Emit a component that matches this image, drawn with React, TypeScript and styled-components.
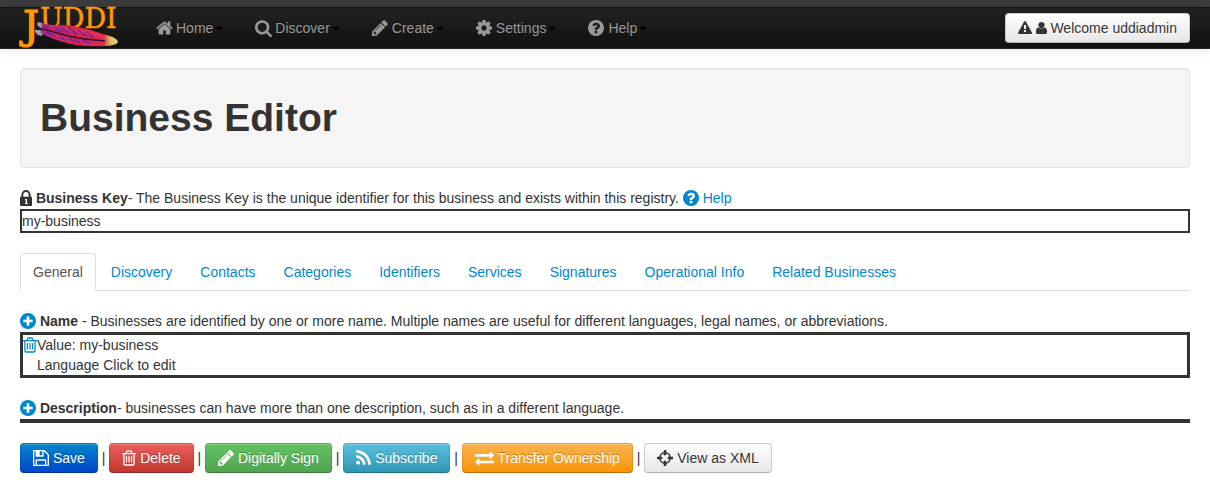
import React from "react";
import styled, { createGlobalStyle, css } from "styled-components";

const GlobalStyle = createGlobalStyle`
  * { box-sizing: border-box; }
  body {
    margin: 0;
    background: #fff;
    color: #333;
    font-family: "Liberation Sans", Arial, sans-serif;
    font-size: 14px;
    line-height: 20px;
  }
  a { color: #08c; text-decoration: none; }
`;

const CIRCLE =
  "M1664 896q0 209-103 385.5t-279.5 279.5-385.5 103-385.5-103-279.5-279.5-103-385.5 103-385.5 279.5-279.5 385.5-103 385.5 103 279.5 279.5 103 385.5z";

/* Each glyph: left edge on a 1792 grid, drawn width on that grid, rendered width in px, outline. */
const glyphs = {
  home: [64, 1664, 17, "M1472 992v480q0 26-19 45t-45 19h-384v-384h-256v384h-384q-26 0-45-19t-19-45v-480q0-1 .5-3t.5-3l575-474 575 474q1 2 1 6zm223-69l-62 74q-8 9-21 11h-3q-13 0-21-7l-692-577-692 577q-12 8-24 7-13-2-21-11l-62-74q-8-10-7-23.5t11-21.5l719-599q32-26 76-26t76 26l244 204v-195q0-14 9-23t23-9h192q14 0 23 9t9 23v408l219 182q10 8 11 21.5t-7 23.5z"],
  search: [64, 1664, 17, "M1216 832q0-185-131.5-316.5t-316.5-131.5-316.5 131.5-131.5 316.5 131.5 316.5 316.5 131.5 316.5-131.5 131.5-316.5zm512 832q0 52-38 90t-90 38q-54 0-90-38l-343-342q-179 124-399 124-143 0-273.5-55.5t-225-150-150-225-55.5-273.5 55.5-273.5 150-225 225-150 273.5-55.5 273.5 55.5 225 150 150 225 55.5 273.5q0 220-124 399l343 343q37 37 37 90z"],
  pencil: [128, 1536, 16, "M491 1536l91-91-235-235-91 91v107h128v128h107zm523-928q0-22-22-22-10 0-17 7l-542 542q-7 7-7 17 0 22 22 22 10 0 17-7l542-542q7-7 7-17zm-54-192l416 416-832 832h-416v-416zm683 96q0 53-37 90l-166 166-416-416 166-165q36-38 90-38 53 0 91 38l235 234q37 39 37 91z"],
  cog: [128, 1536, 16, "M1152 896q0-106-75-181t-181-75-181 75-75 181 75 181 181 75 181-75 75-181zm512-109v222q0 12-8 23t-20 13l-185 28q-19 54-39 91 35 50 107 138 10 12 10 25t-9 23q-27 37-99 108t-94 71q-12 0-26-9l-138-108q-44 23-91 38-16 136-29 186-7 28-36 28h-222q-14 0-24.5-8.5t-11.5-21.5l-28-184q-49-16-90-37l-141 107q-10 9-25 9-14 0-25-11-126-114-165-168-7-10-7-23 0-12 8-23 15-21 51-66.5t54-70.5q-27-50-41-99l-183-27q-13-2-21-12.5t-8-23.5v-222q0-12 8-23t19-13l186-28q14-46 39-92-40-57-107-138-10-12-10-24 0-10 9-23 26-36 98.5-107.5t94.5-71.5q13 0 26 10l138 107q44-23 91-38 16-136 29-186 7-28 36-28h222q14 0 24.5 8.5t11.5 21.5l28 184q49 16 90 37l142-107q9-9 24-9 13 0 25 10 129 119 165 170 7 8 7 22 0 12-8 23-15 21-51 66.5t-54 70.5q26 50 41 98l183 28q13 2 21 12.5t8 23.5z"],
  question: [128, 1536, 16, "M1024 1376v-192q0-14-9-23t-23-9h-192q-14 0-23 9t-9 23v192q0 14 9 23t23 9h192q14 0 23-9t9-23zm256-672q0-88-55.5-163t-138.5-116-170-41q-243 0-371 213-15 24 8 42l132 100q7 6 19 6 16 0 25-12 53-68 86-92 34-24 86-24 48 0 85.5 26t37.5 59q0 38-20 61t-68 45q-63 28-115.5 86.5t-52.5 125.5v36q0 14 9 23t23 9h192q14 0 23-9t9-23q0-19 21.5-49.5t54.5-49.5q32-18 49-28.5t46-35 44.5-48 28-60.5 12.5-81z" + CIRCLE],
  plus: [128, 1536, 16, "M1344 960v-128q0-26-19-45t-45-19h-256v-256q0-26-19-45t-45-19h-128q-26 0-45 19t-19 45v256h-256q-26 0-45 19t-19 45v128q0 26 19 45t45 19h256v256q0 26 19 45t45 19h128q26 0 45-19t19-45v-256h256q26 0 45-19t19-45z" + CIRCLE],
  lock: [320, 1152, 12, "M640 768h512v-192q0-106-75-181t-181-75-181 75-75 181v192zm832 96v704q0 40-28 68t-68 28h-960q-40 0-68-28t-28-68v-704q0-40 28-68t68-28h32v-192q0-184 132-316t316-132 316 132 132 316v192h32q40 0 68 28t28 68zM800 1000v120h64v260h-64v100h260v-100h-64v-380z"],
  trash: [192, 1408, 14, "M704 736v576q0 14-9 23t-23 9h-64q-14 0-23-9t-9-23v-576q0-14 9-23t23-9h64q14 0 23 9t9 23zm256 0v576q0 14-9 23t-23 9h-64q-14 0-23-9t-9-23v-576q0-14 9-23t23-9h64q14 0 23 9t9 23zm256 0v576q0 14-9 23t-23 9h-64q-14 0-23-9t-9-23v-576q0-14 9-23t23-9h64q14 0 23 9t9 23zm128 724v-948h-896v948q0 22 7 40.5t14.5 27 10.5 8.5h832q3 0 10.5-8.5t14.5-27 7-40.5zm-672-1076h448l-48-117q-7-9-17-11h-317q-10 2-17 11zm928 32v64q0 14-9 23t-23 9h-96v948q0 83-47 143.5t-113 60.5h-832q-66 0-113-58.5t-47-141.5v-952h-96q-14 0-23-9t-9-23v-64q0-14 9-23t23-9h309l70-167q15-37 54-63t79-26h320q40 0 79 26t54 63l70 167h309q14 0 23 9t9 23z"],
  save: [128, 1536, 16, "M512 1536h768v-384h-768v384zm896 0h128v-896q0-14-10-38.5t-20-34.5l-281-281q-10-10-34-20t-39-10v416q0 40-28 68t-68 28h-576q-40 0-68-28t-28-68v-416h-128v1280h128v-416q0-40 28-68t68-28h832q40 0 68 28t28 68v416zm-384-928v-320q0-13-9.5-22.5t-22.5-9.5h-192q-13 0-22.5 9.5t-9.5 22.5v320q0 13 9.5 22.5t22.5 9.5h192q13 0 22.5-9.5t9.5-22.5zm640 32v928q0 40-28 68t-68 28h-1344q-40 0-68-28t-28-68v-1344q0-40 28-68t68-28h928q40 0 88 20t76 48l280 280q28 28 48 76t20 88z"],
  rss: [192, 1408, 15, "M576 1344q0 80-56 136t-136 56-136-56-56-136 56-136 136-56 136 56 56 136zm512 123q2 28-17 48-18 21-47 21h-135q-25 0-43-16.5t-20-41.5q-22-229-184.5-391.5t-391.5-184.5q-25-2-41.5-20t-16.5-43v-135q0-29 21-47 17-17 43-17h5q160 13 306 80.5t259 181.5q114 113 181.5 259t80.5 306zm512 2q2 27-18 47-18 20-46 20h-143q-26 0-44.5-17.5t-19.5-42.5q-12-215-101-408.5t-231.5-336-336-231.5-408.5-102q-25-1-42.5-19.5t-17.5-43.5v-143q0-28 20-46 18-18 44-18h3q262 13 501.5 120t425.5 294q187 186 294 425.5t120 501.5z"],
  exchange: [0, 1792, 19, "M1792 1184v192q0 13-9.5 22.5t-22.5 9.5h-1376v192q0 13-9.5 22.5t-22.5 9.5q-12 0-24-10l-319-320q-9-9-9-22 0-14 9-23l320-320q9-9 23-9 13 0 22.5 9.5t9.5 22.5v192h1376q13 0 22.5 9.5t9.5 22.5zm0-544q0 14-9 23l-320 320q-9 9-23 9-13 0-22.5-9.5t-9.5-22.5v-192h-1376q-13 0-22.5-9.5t-9.5-22.5v-192q0-13 9.5-22.5t22.5-9.5h1376v-192q0-14 9-23t23-9q12 0 24 10l319 319q9 9 9 23z"],
  crosshairs: [128, 1536, 16, "M1325 1024h-109q-26 0-45-19t-19-45v-128q0-26 19-45t45-19h109q-32-108-112.5-188.5t-188.5-112.5v109q0 26-19 45t-45 19h-128q-26 0-45-19t-19-45v-109q-108 32-188.5 112.5t-112.5 188.5h109q26 0 45 19t19 45v128q0 26-19 45t-45 19h-109q32 108 112.5 188.5t188.5 112.5v-109q0-26 19-45t45-19h128q26 0 45 19t19 45v109q108-32 188.5-112.5t112.5-188.5zm339-192v128q0 26-19 45t-45 19h-143q-37 161-154.5 278.5t-278.5 154.5v143q0 26-19 45t-45 19h-128q-26 0-45-19t-19-45v-143q-161-37-278.5-154.5t-154.5-278.5h-143q-26 0-45-19t-19-45v-128q0-26 19-45t45-19h143q37-161 154.5-278.5t278.5-154.5v-143q0-26 19-45t45-19h128q26 0 45 19t19 45v143q161 37 278.5 154.5t154.5 278.5h143q26 0 45 19t19 45z"],
  warning: [0, 1792, 14, "M1024 1375v-190q0-14-9.5-23.5t-22.5-9.5h-192q-13 0-22.5 9.5t-9.5 23.5v190q0 14 9.5 23.5t22.5 9.5h192q13 0 22.5-9.5t9.5-23.5zm-2-374l18-459q0-12-10-19-13-11-24-11h-220q-11 0-24 11-10 7-10 21l17 457q0 10 10 16.5t24 6.5h185q14 0 23.5-6.5t10.5-16.5zm-14-934l768 1408q35 63-2 126-17 29-46.5 46t-63.5 17h-1536q-34 0-63.5-17t-46.5-46q-37-63-2-126l768-1408q17-31 47-49t65-18 65 18 47 49z"],
  user: [192, 1408, 11, "M1600 1399q0 109-62.5 187t-150.5 78h-982q-88 0-150.5-78t-62.5-187q0-85 8.5-160.5t31.5-152 58.5-131 94-89 134.5-34.5q131 128 377 128t377-128q76 0 134.5 34.5t94 89 58.5 131 31.5 152 8.5 160.5zm-304-887q0 166-117 283t-283 117-283-117-117-283 117-283 283-117 283 117 117 283z"],
} as const;

type GlyphName = keyof typeof glyphs;

const Glyph = styled.svg<{ $small?: boolean }>`
  flex: none;
  height: ${(p) => (p.$small ? "14px" : "18px")};
  fill: currentColor;
  fill-rule: evenodd;
  vertical-align: ${(p) => (p.$small ? "-2px" : "-4px")};
`;

function Icon({ name, small }: { name: GlyphName; small?: boolean }) {
  const [x, w, px, d] = glyphs[name];
  return (
    <Glyph $small={small} width={px} viewBox={small ? `${x} 0 ${w} 1792` : `${x} 32 ${w} 1728`} aria-hidden="true">
      <path d={d} />
    </Glyph>
  );
}

const TopStrip = styled.div`
  height: 7px;
  background: #3c3c3c;
`;

const Navbar = styled.header`
  display: flex;
  align-items: center;
  height: 42px;
  padding: 0 20px;
  background: linear-gradient(#222, #111);
  border-top: 1px solid #151515;
  border-bottom: 1px solid #252525;
  box-shadow: 0 1px 10px rgba(0, 0, 0, 0.1);
`;

const Brand = styled.a`
  display: flex;
  width: 104px;
  margin-right: 17px;
`;

const LogoArt = styled.svg`
  overflow: visible;
`;

const Menu = styled.nav`
  display: flex;
  flex: 1;
  gap: 2px;
`;

const MenuLink = styled.a`
  display: flex;
  align-items: center;
  padding: 10px 15px;
  color: #999;
  text-shadow: 0 -1px 0 rgba(0, 0, 0, 0.25);
`;

const MenuIcon = styled.span`
  display: flex;
  width: 20px;
`;

const Caret = styled.span`
  margin: 2px 0 0 2px;
  border: 4px solid transparent;
  border-top-color: #000;
  border-bottom: 0;
`;

type Tone = "plain" | "primary" | "danger" | "success" | "info" | "warning";

const tones: Record<Tone, [string, string]> = {
  plain: ["#fff", "#e6e6e6"],
  primary: ["#08c", "#04c"],
  danger: ["#ee5f5b", "#bd362f"],
  success: ["#62c462", "#51a351"],
  info: ["#5bc0de", "#2f96b4"],
  warning: ["#fbb450", "#f89406"],
};

const Button = styled.button<{ $tone?: Tone }>`
  height: 30px;
  padding: 4px 12px;
  border: 1px solid;
  border-radius: 4px;
  font: inherit;
  line-height: 20px;
  white-space: nowrap;
  cursor: pointer;
  background: ${(p) => `linear-gradient(${tones[p.$tone ?? "plain"].join(", ")}) border-box`};
  box-shadow: inset 0 1px 0 rgba(255, 255, 255, 0.2), 0 1px 2px rgba(0, 0, 0, 0.05);
  ${(p) =>
    (p.$tone ?? "plain") === "plain"
      ? css`
          color: #333;
          text-shadow: 0 1px 1px rgba(255, 255, 255, 0.75);
          border-color: #ccc #ccc #b3b3b3;
        `
      : css`
          color: #fff;
          text-shadow: 0 -1px 0 rgba(0, 0, 0, 0.25);
          border-color: rgba(0, 0, 0, 0.1) rgba(0, 0, 0, 0.1) rgba(0, 0, 0, 0.25);
        `}
`;

const Page = styled.main`
  padding: 19px 20px 15px;
`;

const Hero = styled.div`
  margin-bottom: 20px;
  padding: 29px 19px;
  background: #f5f5f5;
  border: 1px solid #e3e3e3;
  border-radius: 4px;
  box-shadow: inset 0 1px 1px rgba(0, 0, 0, 0.05);
`;

const Title = styled.h1`
  margin: 0;
  font-size: 39px;
  line-height: 40px;
`;

const FieldLine = styled.div`
  min-height: 21px;
  line-height: 20px;
`;

const Outline = styled.div<{ $weight: number }>`
  display: flex;
  margin-bottom: 20px;
  border: ${(p) => p.$weight}px solid #333;
`;

const Rule = styled.hr`
  height: 4px;
  margin: 0 0 20px;
  border: 0;
  background: #333;
`;

const Tabs = styled.nav`
  display: flex;
  gap: 2px;
  margin-bottom: 20px;
  border-bottom: 1px solid #ddd;
`;

const Tab = styled.a<{ $active?: boolean }>`
  margin-bottom: -1px;
  padding: 8px 12px;
  border: 1px solid transparent;
  border-radius: 4px 4px 0 0;
  white-space: nowrap;
  ${(p) =>
    p.$active &&
    css`
      color: #555;
      background: #fff;
      border-color: #ddd #ddd transparent;
    `}
`;

const Actions = styled.div`
  line-height: 30px;
`;

function Logo() {
  return (
    <LogoArt width="104" height="40" viewBox="0 0 104 40" aria-label="JUDDI">
      <defs>
        <linearGradient id="vane" x1="0" x2="1">
          <stop offset="0" stopColor="#b5237a" />
          <stop offset="0.45" stopColor="#dc1f4c" />
          <stop offset="0.8" stopColor="#e22c50" />
          <stop offset="0.88" stopColor="#e0b860" />
          <stop offset="1" stopColor="#ead884" />
        </linearGradient>
        <clipPath id="vaneClip">
          <path d="M22 15Q31 18 47 17Q66 20 83 26Q97 29 98 34Q97 37 86 38Q66 39 50 36Q31 31 21 25Z" />
        </clipPath>
      </defs>
      <g fill="#ff9800" stroke="#ff9800" fontFamily="'DejaVu Serif', serif">
        <text x="3" y="31" fontSize="40" strokeWidth="1.2">
          J
        </text>
        <text x="20" y="20" fontSize="27" strokeWidth="0.5">
          UDDI
        </text>
      </g>
      <g fill="#8fa3b3">
        <path d="M18 14l4 1 2 3-2 3-4-3-1-2z" />
        <path d="M15 22l5 0 3 3-1 3-4-1-3-3z" />
      </g>
      <g clipPath="url(#vaneClip)">
        <path d="M18 12h82v28h-82z" fill="url(#vane)" />
        <g stroke="#6a2a9a" strokeWidth="2" fill="none">
          <path d="M23 20l6-2M26 24l8 4M34 20l8 4M40 19l9 6M48 19l9 7M58 22l8 6M66 24l8 6M38 30l10 2M50 31l10 4M62 33l9 2" />
        </g>
        <g stroke="#ff4a78" strokeWidth="1" fill="none" opacity="0.5">
          <path d="M28 16l9 6M33 16l9 6M38 16l9 7M43 17l9 7M50 18l9 7M56 19l9 7M62 21l9 7M69 22l8 7M75 24l8 6M30 27l6 5M36 28l7 5M44 30l7 5M52 31l7 6M60 32l7 6M68 33l6 5" />
        </g>
        <path d="M19 20Q34 24 48 28Q66 32 85 33" stroke="#2b1230" strokeWidth="1.6" fill="none" />
      </g>
    </LogoArt>
  );
}

const menu: [GlyphName, string][] = [
  ["home", "Home"],
  ["search", "Discover"],
  ["pencil", "Create"],
  ["cog", "Settings"],
  ["question", "Help"],
];

const tabs = [
  "General",
  "Discovery",
  "Contacts",
  "Categories",
  "Identifiers",
  "Services",
  "Signatures",
  "Operational Info",
  "Related Businesses",
];

const actions: [Tone, GlyphName, string][] = [
  ["primary", "save", "Save"],
  ["danger", "trash", "Delete"],
  ["success", "pencil", "Digitally Sign"],
  ["info", "rss", "Subscribe"],
  ["warning", "exchange", "Transfer Ownership"],
  ["plain", "crosshairs", "View as XML"],
];

export default function App() {
  return (
    <>
      <GlobalStyle />
      <TopStrip />
      <Navbar>
        <Brand href="#home">
          <Logo />
        </Brand>
        <Menu>
          {menu.map(([icon, label]) => (
            <MenuLink key={label} href={`#${label.toLowerCase()}`}>
              <MenuIcon>
                <Icon name={icon} />
              </MenuIcon>
              {label}
              <Caret />
            </MenuLink>
          ))}
        </Menu>
        <Button type="button">
          <Icon name="warning" small /> <Icon name="user" small /> Welcome uddiadmin
        </Button>
      </Navbar>
      <Page>
        <Hero>
          <Title>Business Editor</Title>
        </Hero>
        <FieldLine>
          <Icon name="lock" /> <b>Business Key</b>- The Business Key is the unique identifier for this business and
          exists within this registry.{" "}
          <a href="#key-help">
            <Icon name="question" /> Help
          </a>
        </FieldLine>
        <Outline $weight={2}>my-business</Outline>
        <Tabs>
          {tabs.map((label, i) => (
            <Tab key={label} href={`#tab-${i}`} $active={i === 0}>
              {label}
            </Tab>
          ))}
        </Tabs>
        <FieldLine>
          <a href="#add-name" aria-label="Add name">
            <Icon name="plus" />
          </a>{" "}
          <b>Name</b> - Businesses are identified by one or more name. Multiple names are useful for different
          languages, legal names, or abbreviations.
        </FieldLine>
        <Outline $weight={3}>
          <a href="#remove-name" aria-label="Remove name">
            <Icon name="trash" />
          </a>
          <div>
            <div>Value: my-business</div>
            <div>Language Click to edit</div>
          </div>
        </Outline>
        <FieldLine>
          <a href="#add-description" aria-label="Add description">
            <Icon name="plus" />
          </a>{" "}
          <b>Description</b>- businesses can have more than one description, such as in a different language.
        </FieldLine>
        <Rule />
        <Actions>
          {actions.map(([tone, icon, label], i) => (
            <React.Fragment key={label}>
              {i > 0 && " | "}
              <Button type="button" $tone={tone}>
                <Icon name={icon} /> {label}
              </Button>
            </React.Fragment>
          ))}
        </Actions>
      </Page>
    </>
  );
}
